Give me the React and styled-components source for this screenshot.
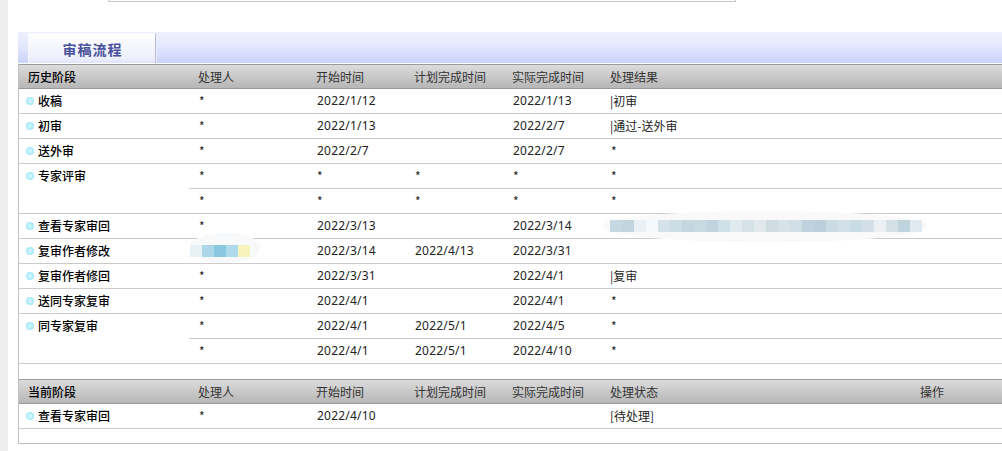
import React from "react";
import styled, { createGlobalStyle } from "styled-components";

const Global = createGlobalStyle`
  html, body { margin: 0; padding: 0; background: #fff; overflow: hidden; }
  body { font-family: "Noto Sans", "Noto Sans CJK SC", sans-serif; font-size: 12px; color: #222; }
`;

const Page = styled.div`
  display: flex;
  width: 1002px;
  height: 451px;
  overflow: hidden;
`;
const Rail = styled.div`
  width: 8px;
  flex: none;
  background: #ededed;
`;
const Main = styled.div`
  flex: 1;
  min-width: 0;
  padding-left: 10px;
`;
const TopBoxSlot = styled.div`
  height: 32px;
  padding-left: 90px;
`;
const TopBox = styled.div`
  width: 628px;
  height: 2px;
  box-sizing: border-box;
  background: #fff;
  border: 1px solid #c8c8c8;
  border-top: 0;
`;
const TabBar = styled.div`
  height: 31px;
  padding-left: 10px;
  display: flex;
  align-items: flex-end;
  background: linear-gradient(#eef0fd 0%, #e6e9fd 40%, #c9d2fd 100%);
`;
const Tab = styled.div`
  width: 128px;
  height: 30px;
  box-sizing: border-box;
  display: flex;
  align-items: center;
  justify-content: center;
  padding-left: 1px;
  background: linear-gradient(#ffffff, #eceefb 85%, #dfe3fb);
  border: 1px solid #f8f9ff;
  border-right: 1px solid #b4bad8;
  border-bottom: 0;
  box-shadow: 1px 0 0 #eef0fd;
  color: #47509b;
  font-family: "Noto Sans CJK SC", sans-serif;
  font-weight: 700;
  font-size: 14px;
  letter-spacing: 1px;
`;
const Panel = styled.div`
  margin-top: 1px;
  border-left: 1px solid #c2c2c2;
  border-bottom: 1px solid #bcbcbc;
`;
const Columns = styled.div`
  display: grid;
  grid-template-columns: 118px 98px 98px 98px 310px 1fr;
  align-items: center;
`;
const HeadRow = styled.div`
  display: grid;
  grid-template-columns: 170px 1fr;
  height: 25px;
  box-sizing: border-box;
  align-items: center;
  background: linear-gradient(#dcdcdc, #b6b6b6);
  border-top: 1px solid #9a9a9a;
  border-bottom: 1px solid #9a9a9a;
  font-family: "Noto Sans CJK SC", sans-serif;
  color: #333;
`;
const HeadStage = styled.div`
  padding-left: 9px;
  font-weight: 500;
  color: #000;
`;
const Row = styled.div`
  display: grid;
  grid-template-columns: 170px 1fr;
  border-bottom: 1px solid #cbcbcb;
`;
const Stage = styled.div`
  display: flex;
  align-items: center;
  gap: 4px;
  height: 24px;
  padding-left: 7px;
  font-family: "Noto Sans CJK SC", sans-serif;
  font-weight: 500;
  color: #000;
`;
const StageText = styled.span`
  line-height: 20px;
  margin-top: -1px;
`;
const Bullet = styled.span`
  width: 8px;
  height: 8px;
  border-radius: 50%;
  flex: none;
  background: radial-gradient(circle at 50% 50%, #e0f9ff 0%, #b4eefd 45%, #8fdff7 100%);
`;
const SubRow = styled(Columns)`
  height: 24px;
  box-sizing: border-box;
  padding: 0 0 1px 9px;
  & + & {
    height: 25px;
    border-top: 1px solid #cbcbcb;
  }
`;
const HeadCols = styled(Columns)`
  padding-left: 9px;
`;
const Cell = styled.div`
  white-space: nowrap;
  color: #222;
  font-family: "Noto Sans", "Noto Sans CJK SC", sans-serif;
  letter-spacing: 0.2px;
  padding-left: 1px;
`;
const StarCell = styled(Cell)`
  letter-spacing: 0;
  font-family: "Noto Sans CJK SC", sans-serif;
`;
const ResultCell = styled(StarCell)`
  padding-left: 0;
`;
const Spacer = styled.div`
  height: ${(p) => p.$h}px;
`;
const MosaicCell = styled.div`
  position: relative;
  height: 12px;
`;
const Halo = styled.div`
  position: absolute;
  left: ${(p) => p.$left}px;
  top: ${(p) => p.$top}px;
  width: ${(p) => p.$w}px;
  height: ${(p) => p.$h}px;
  border-radius: 50% / 45%;
  background: ${(p) => p.$c};
`;
const Blocks = styled.div`
  position: absolute;
  left: ${(p) => p.$left}px;
  top: 0;
  display: flex;
`;
const Block = styled.span`
  width: 12px;
  height: 12px;
  background: ${(p) => p.$c};
`;

const Mosaic = ({ colors, left, halo }) => (
  <MosaicCell>
    <Halo $left={halo.left} $top={halo.top} $w={halo.w} $h={halo.h} $c={halo.c} />
    <Blocks $left={left}>
      {colors.map((c, i) => (
        <Block key={i} $c={c} />
      ))}
    </Blocks>
  </MosaicCell>
);

const personBlur = ["#e8f1f6", "#acd7e8", "#8ac8e0", "#aedaeb", "#f5f3bb"];
const resultBlur = [
  "#c6d9e3", "#c3d6e0", "#e9f1f5", "#f5f9fb", "#d6e2e9", "#cddde5", "#c5d6e1", "#c8d9e2", "#c0d3de",
  "#cfdfe7", "#e0e9ee", "#d5e3e8", "#e2e9ed", "#cfdce2", "#d7e2e8", "#d0dfe6", "#bfd2de", "#bcd0dc",
  "#cbdbe3", "#d2e1e8", "#c9dbe4", "#d2dfe6", "#eaf0f3", "#d3e1e6", "#bfd4df", "#e0e9ef",
];

const Star = "*";
const rows = [
  { stage: "收稿", lines: [[Star, "2022/1/12", "", "2022/1/13", "|初审"]] },
  { stage: "初审", lines: [[Star, "2022/1/13", "", "2022/2/7", "|通过-送外审"]] },
  { stage: "送外审", lines: [[Star, "2022/2/7", "", "2022/2/7", Star]] },
  {
    stage: "专家评审",
    lines: [
      [Star, Star, Star, Star, Star],
      [Star, Star, Star, Star, Star],
    ],
  },
  { stage: "查看专家审回", lines: [[Star, "2022/3/13", "", "2022/3/14", "@result"]] },
  { stage: "复审作者修改", lines: [["@person", "2022/3/14", "2022/4/13", "2022/3/31", ""]] },
  { stage: "复审作者修回", lines: [[Star, "2022/3/31", "", "2022/4/1", "|复审"]] },
  { stage: "送同专家复审", lines: [[Star, "2022/4/1", "", "2022/4/1", Star]] },
  {
    stage: "同专家复审",
    lines: [
      [Star, "2022/4/1", "2022/5/1", "2022/4/5", Star],
      [Star, "2022/4/1", "2022/5/1", "2022/4/10", Star],
    ],
  },
];

const renderCell = (v, i) => {
  if (v === "@person")
    return (
      <Mosaic
        key={i}
        colors={personBlur}
        left={-8}
        halo={{ left: -8, top: -12, w: 70, h: 30, c: "#f7f9fa" }}
      />
    );
  if (v === "@result")
    return (
      <Mosaic
        key={i}
        colors={resultBlur}
        left={0}
        halo={{ left: -6, top: -9, w: 322, h: 31, c: "#f9f9f9" }}
      />
    );
  if (v === Star) return <StarCell key={i}>{v}</StarCell>;
  if (i === 4) return <ResultCell key={i}>{v}</ResultCell>;
  return <Cell key={i}>{v}</Cell>;
};

const Header = ({ stage, labels }) => (
  <HeadRow>
    <HeadStage>{stage}</HeadStage>
    <HeadCols>
      {labels.map((l, i) => (
        <div key={i}>{l}</div>
      ))}
    </HeadCols>
  </HeadRow>
);

const DataRow = ({ stage, lines }) => (
  <Row>
    <Stage>
      <Bullet />
      <StageText>{stage}</StageText>
    </Stage>
    <div>
      {lines.map((line, i) => (
        <SubRow key={i}>{line.map(renderCell)}</SubRow>
      ))}
    </div>
  </Row>
);

export default function App() {
  return (
    <Page>
      <Global />
      <Rail />
      <Main>
        <TopBoxSlot>
          <TopBox />
        </TopBoxSlot>
        <TabBar>
          <Tab>审稿流程</Tab>
        </TabBar>
        <Panel>
          <Header
            stage="历史阶段"
            labels={["处理人", "开始时间", "计划完成时间", "实际完成时间", "处理结果"]}
          />
          {rows.map((r) => (
            <DataRow key={r.stage} stage={r.stage} lines={r.lines} />
          ))}
          <Spacer $h={15} />
          <Header
            stage="当前阶段"
            labels={["处理人", "开始时间", "计划完成时间", "实际完成时间", "处理状态", "操作"]}
          />
          <DataRow stage="查看专家审回" lines={[[Star, "2022/4/10", "", "", "[待处理]"]]} />
          <Spacer $h={14} />
        </Panel>
      </Main>
    </Page>
  );
}
